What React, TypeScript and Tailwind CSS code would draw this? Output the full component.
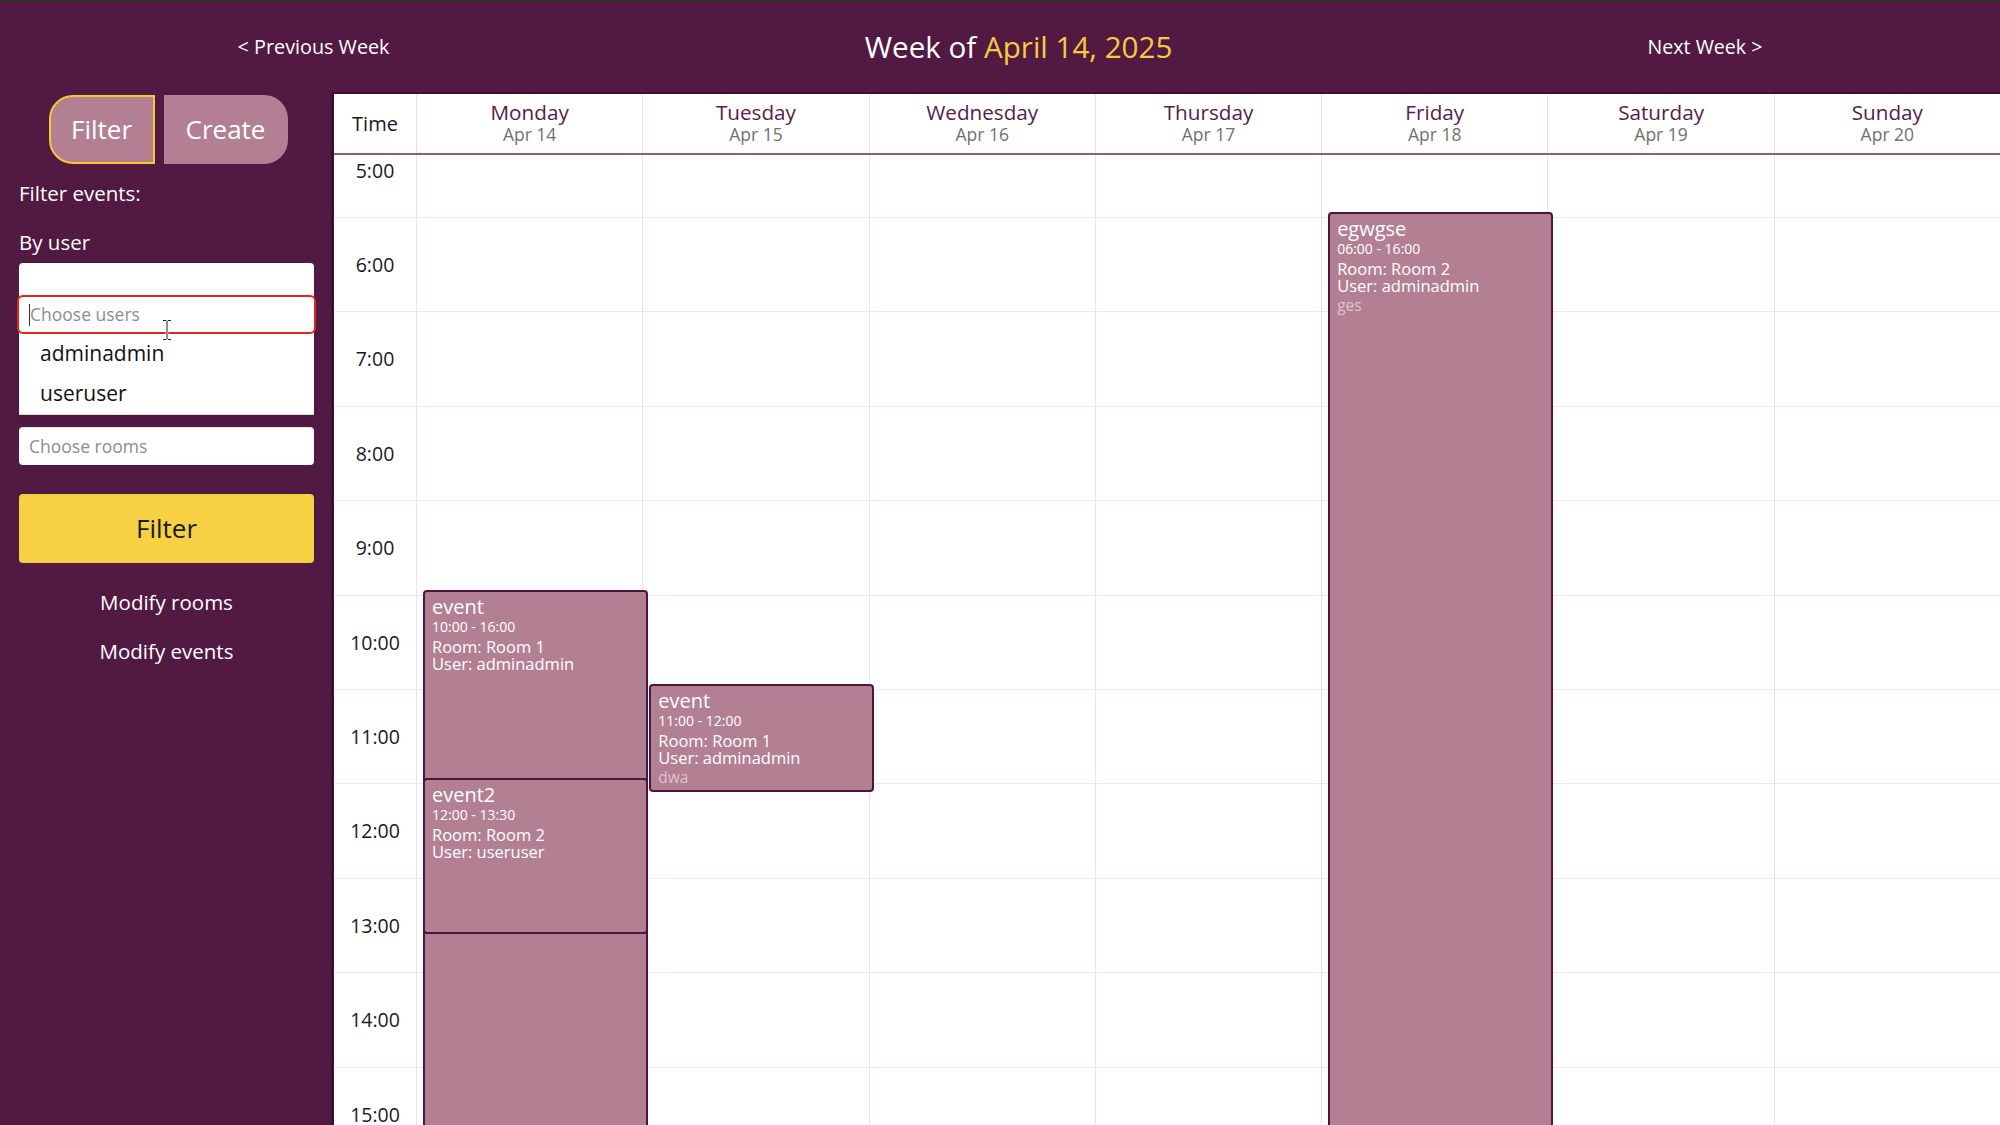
import { useState } from "react";

type CalEvent = {
  id: number;
  day: number;
  title: string;
  start: number;
  end: number;
  time: string;
  room: string;
  user: string;
  note?: string;
};

const HOUR = 94.4;
const FIRST_HOUR = 5;

const days = [
  { name: "Monday", date: "Apr 14" },
  { name: "Tuesday", date: "Apr 15" },
  { name: "Wednesday", date: "Apr 16" },
  { name: "Thursday", date: "Apr 17" },
  { name: "Friday", date: "Apr 18" },
  { name: "Saturday", date: "Apr 19" },
  { name: "Sunday", date: "Apr 20" },
];

const hours = [5, 6, 7, 8, 9, 10, 11, 12, 13, 14, 15];

const events: CalEvent[] = [
  { id: 1, day: 0, title: "event", start: 10, end: 16, time: "10:00 - 16:00", room: "Room 1", user: "adminadmin" },
  { id: 2, day: 0, title: "event2", start: 12, end: 13.5, time: "12:00 - 13:30", room: "Room 2", user: "useruser" },
  { id: 3, day: 1, title: "event", start: 11, end: 12, time: "11:00 - 12:00", room: "Room 1", user: "adminadmin", note: "dwa" },
  { id: 4, day: 4, title: "egwgse", start: 6, end: 16, time: "06:00 - 16:00", room: "Room 2", user: "adminadmin", note: "ges" },
];

const users = ["adminadmin", "useruser"];

// mouse cursor hovering the search input
const IBeam = () => (
  <svg width="10" height="22" viewBox="0 0 10 22" className="absolute left-[143px] top-[22px]">
    <path d="M1 1.5h3l1 1 1-1h3M5 2.5v17M1 20.5h3l1-1 1 1h3" fill="none" stroke="#fff" strokeWidth="2.5" />
    <path d="M1 1.5h3l1 1 1-1h3M5 2.5v17M1 20.5h3l1-1 1 1h3" fill="none" stroke="#222" strokeWidth="1" />
  </svg>
);

const EventCard = ({ ev }: { ev: CalEvent }) => {
  const top = (ev.start - FIRST_HOUR) * HOUR - 6;
  const height = (ev.end - ev.start) * HOUR + 14;
  return (
    <div
      className="absolute z-10 left-[6px] w-[225px] bg-[#b38093] border-2 border-[#4c1441] rounded-[4px] px-[7px] pt-[3px] text-white overflow-hidden"
      style={{ top, height }}
    >
      <div className="text-[20px] leading-[24px]">{ev.title}</div>
      <div className="text-[14px] leading-[16px]">{ev.time}</div>
      <div className="mt-[3px] text-[16.5px] leading-[17px]">Room: {ev.room}</div>
      <div className="text-[16.5px] leading-[17px]">User: {ev.user}</div>
      {ev.note && <div className="mt-[1px] text-[15.5px] leading-[20px] text-[#dcc3cd]">{ev.note}</div>}
    </div>
  );
};

const Sidebar = () => {
  const [tab, setTab] = useState("filter");
  return (
    <aside className="w-[331px] shrink-0 pl-[19px] pr-[17px] text-white">
      <div className="mt-[3px] ml-[3px] flex justify-center gap-[9px]">
        <button
          onClick={() => setTab("filter")}
          className={`w-[106px] h-[69px] rounded-l-[24px] bg-[#b38093] text-[26px] ${
            tab === "filter" ? "border-2 border-[#f7c92e]" : ""
          }`}
        >
          Filter
        </button>
        <button
          onClick={() => setTab("create")}
          className={`w-[124px] h-[69px] rounded-r-[24px] bg-[#b38093] text-[26px] ${
            tab === "create" ? "border-2 border-[#f7c92e]" : ""
          }`}
        >
          Create
        </button>
      </div>

      <p className="mt-[15px] text-[20.5px] leading-[28px]">Filter events:</p>
      <p className="mt-[21px] text-[20.5px] leading-[28px]">By user</p>

      {/* users multiselect, dropdown open */}
      <div className="relative mt-[7px]">
        <div className="h-[38px] bg-white rounded-[4px]" />
        <div className="absolute z-20 top-[32px] left-0 right-0 bg-white border-b border-[#dedede] shadow-sm">
          <div className="relative -mx-[2px] h-[39px] border-2 border-[#e3261d] rounded-[6px] bg-white flex items-center pl-[10px]">
            <span className="w-px h-[22px] bg-[#333]" />
            <span className="text-[17.5px] text-[#8d8d8d]">Choose users</span>
            <IBeam />
          </div>
          <ul>
            {users.map((u) => (
              <li key={u} className="h-[40px] flex items-center pl-[21px] text-[21px] text-[#111]">
                {u}
              </li>
            ))}
          </ul>
        </div>
      </div>

      {/* rooms multiselect */}
      <div className="mt-[126px] h-[38px] bg-white rounded-[4px] border-t border-[#e6e6e6] flex items-center pl-[10px]">
        <span className="text-[17.5px] text-[#8d8d8d]">Choose rooms</span>
      </div>

      <button className="mt-[29px] w-full h-[69px] bg-[#f8d043] rounded-[4px] text-[26px] text-[#1a1a1a]">
        Filter
      </button>

      <p className="mt-[25px] text-center text-[20.5px] leading-[28px]">Modify rooms</p>
      <p className="mt-[21px] text-center text-[20.5px] leading-[28px]">Modify events</p>
    </aside>
  );
};

const App = () => {
  return (
    <div className="w-full h-[1125px] overflow-hidden flex flex-col bg-[#521943] font-['Open_Sans',sans-serif]">
      <div className="h-[2px] bg-[#2f2f2f]" />
      <header className="h-[90px] shrink-0 flex items-center justify-around text-white">
        <button className="text-[19.8px]">&lt; Previous Week</button>
        <h1 className="text-[29.6px]">
          Week of <span className="text-[#f5cd3c]">April 14, 2025</span>
        </h1>
        <button className="text-[19.6px]">Next Week &gt;</button>
      </header>

      <div className="flex flex-1 min-h-0">
        <Sidebar />

        <main className="flex-1 min-w-0 flex flex-col bg-white border-l-[3px] border-t-2 border-[#3e0f32]">
          <div className="h-[61px] shrink-0 grid grid-cols-[82px_repeat(7,1fr)] border-b-2 border-[#8a5f80]">
            <div className="flex items-center justify-center text-[20px] text-[#1a1a1a]">Time</div>
            {days.map((d) => (
              <div key={d.name} className="border-l border-[#f3dfe8] flex flex-col items-center pt-[6px]">
                <span className="text-[20.7px] leading-[24px] text-[#5a1b4a]">{d.name}</span>
                <span className="text-[17.5px] leading-[20px] text-[#707070]">{d.date}</span>
              </div>
            ))}
          </div>

          <div className="flex-1 min-h-0 overflow-hidden">
            <div className="-mt-[31.4px] grid grid-cols-[82px_repeat(7,1fr)]">
              <div>
                {hours.map((h) => (
                  <div
                    key={h}
                    className="h-[94.4px] border-b border-[#f6e3eb] flex items-center justify-center text-[19.5px] text-[#1a1a1a]"
                  >
                    {h}:00
                  </div>
                ))}
              </div>
              {days.map((d, i) => (
                <div key={d.name} className="relative border-l border-[#f3dfe8]">
                  {hours.map((h) => (
                    <div key={h} className="h-[94.4px] border-b border-[#f6e3eb]" />
                  ))}
                  {events
                    .filter((e) => e.day === i)
                    .map((e) => (
                      <EventCard key={e.id} ev={e} />
                    ))}
                </div>
              ))}
            </div>
          </div>
        </main>
      </div>
    </div>
  );
};

export default App;
